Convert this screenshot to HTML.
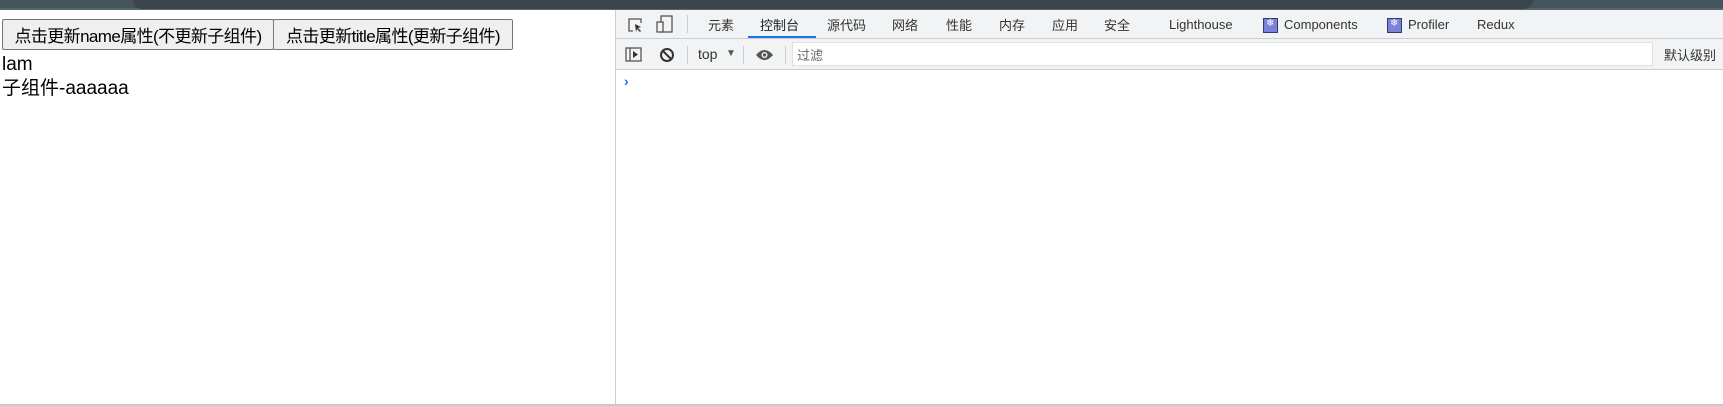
<!DOCTYPE html>
<html><head><meta charset="utf-8"><style>
*{margin:0;padding:0;box-sizing:border-box}
body{width:1723px;height:406px;background:#fff;position:relative;overflow:hidden;font-family:"Liberation Sans","Noto Sans CJK SC",sans-serif}
.abs{position:absolute}
#top{left:0;top:0;width:1723px;height:10px;background:#45555d;border-bottom:2px solid #56666e}
#addr{left:133px;top:0;width:1400px;height:9px;background:#3a464c;border-radius:0 0 10px 10px}
button{position:absolute;top:19px;height:31px;font-family:"Liberation Sans","Noto Sans CJK SC",sans-serif;font-size:17px;letter-spacing:-0.6px;background:#efefef;border:1px solid #767676;border-radius:2px;color:#000;padding:0;text-align:center;white-space:nowrap;overflow:hidden}
.t{font-size:19px;color:#000;white-space:nowrap;line-height:24px}
#dt{left:615px;top:10px;width:1108px;height:396px;background:#fff;border-left:1px solid #cbcdd1}
#tabs{left:0;top:0;width:1108px;height:29px;background:#f1f3f4;border-bottom:1px solid #cbcdd1}
#tb2{left:0;top:29px;width:1108px;height:31px;background:#f1f3f4;border-bottom:1px solid #cbcdd1}
.tab{position:absolute;top:5px;font-size:13px;color:#333;white-space:nowrap}
.sep{position:absolute;width:1px;height:18px;background:#cbcdd1}
.ri{position:absolute;top:8px;width:15px;height:15px;background:#7b80d8;border:1.5px solid #333a6b}
.ri::after{content:"❄";position:absolute;left:2px;top:-1px;font-size:10px;color:#fff}
#bot{left:0;top:404px;width:1723px;height:2px;background:#c8c8c8}
</style></head><body>
<div id="top" class="abs"></div><div id="addr" class="abs"></div>
<button style="left:2px;width:272px">点击更新name属性(不更新子组件)</button>
<button style="left:273px;width:240px">点击更新title属性(更新子组件)</button>
<div class="abs t" style="left:2px;top:53px">lam</div>
<div class="abs t" style="left:2px;top:77px">子组件-aaaaaa</div>
<div id="dt" class="abs">
 <div id="tabs" class="abs">
  <svg class="abs" style="left:11px;top:7px" width="18" height="16"><path d="M6 14H2V2h12v4" fill="none" stroke="#555" stroke-width="1.3"/><path d="M8 7l6 3-3 1 3 3-1 1-3-3-1 3z" fill="#333"/></svg>
  <svg class="abs" style="left:40px;top:5px" width="18" height="19"><rect x="5" y="1" width="11" height="16" fill="none" stroke="#555" stroke-width="1.3"/><rect x="1" y="7" width="6" height="10" fill="#f1f3f4" stroke="#555" stroke-width="1.3"/></svg>
  <div class="sep" style="left:71px;top:5px"></div>
  <div class="tab" style="left:92px">元素</div>
  <div class="tab" style="left:144px;color:#202124">控制台</div>
  <div class="abs" style="left:132px;top:26px;width:68px;height:2px;background:#1a73e8"></div>
  <div class="tab" style="left:211px">源代码</div>
  <div class="tab" style="left:276px">网络</div>
  <div class="tab" style="left:330px">性能</div>
  <div class="tab" style="left:383px">内存</div>
  <div class="tab" style="left:436px">应用</div>
  <div class="tab" style="left:488px">安全</div>
  <div class="tab" style="left:553px;top:7px">Lighthouse</div>
  <div class="ri" style="left:647px"></div>
  <div class="tab" style="left:668px;top:7px">Components</div>
  <div class="ri" style="left:771px"></div>
  <div class="tab" style="left:792px;top:7px">Profiler</div>
  <div class="tab" style="left:861px;top:7px">Redux</div>
 </div>
 <div id="tb2" class="abs">
  <svg class="abs" style="left:9px;top:8px" width="18" height="16"><rect x="1" y="1" width="15" height="13" fill="none" stroke="#555" stroke-width="1.3"/><line x1="5" y1="1" x2="5" y2="14" stroke="#555" stroke-width="1.3"/><path d="M8 4l5 3.5-5 3.5z" fill="#333"/></svg>
  <svg class="abs" style="left:43px;top:8px" width="16" height="16"><circle cx="8" cy="8" r="6" fill="none" stroke="#333" stroke-width="2"/><line x1="4" y1="4" x2="12" y2="12" stroke="#333" stroke-width="2"/></svg>
  <div class="sep" style="left:71px;top:7px"></div>
  <div class="tab" style="left:82px;top:7px;font-size:14px">top</div>
  <div class="abs" style="left:110px;top:9px;font-size:10px;color:#555">▼</div>
  <div class="sep" style="left:127px;top:7px"></div>
  <svg class="abs" style="left:139px;top:9px" width="19" height="14"><path d="M1 7Q9.5-3 18 7Q9.5 17 1 7z" fill="#555"/><circle cx="9.5" cy="7" r="3" fill="#f1f3f4"/><circle cx="9.5" cy="7" r="1.6" fill="#555"/></svg>
  <div class="sep" style="left:169px;top:7px"></div>
  <div class="abs" style="left:176px;top:3px;width:861px;height:24px;background:#fff;border:1px solid #e0e0e0"></div>
  <div class="tab" style="left:181px;top:6px;color:#666">过滤</div>
  <div class="tab" style="left:1048px;top:6px">默认级别</div>
 </div>
 <div class="abs" style="left:8px;top:63px;font-size:14px;color:#1a73e8;font-weight:bold">›</div>
</div>
<div id="bot" class="abs"></div>
</body></html>
